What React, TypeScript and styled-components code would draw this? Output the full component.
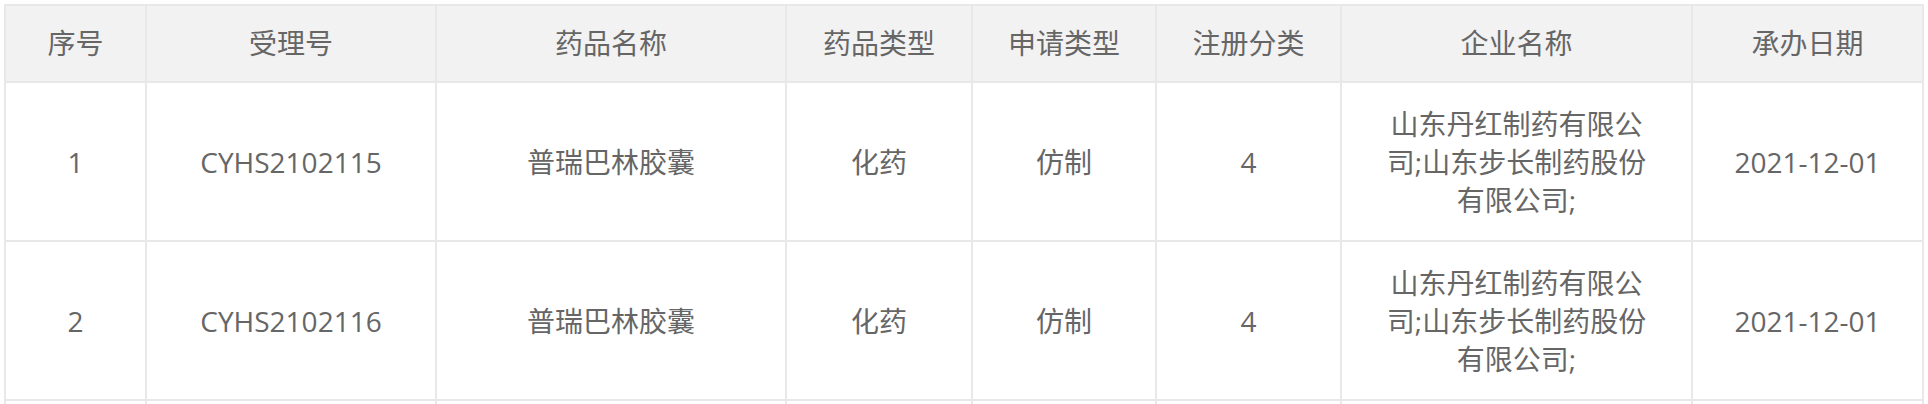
import React from "react";
import styled, { createGlobalStyle } from "styled-components";

const GlobalStyle = createGlobalStyle`
  html, body {
    margin: 0;
    padding: 0;
    background: #ffffff;
  }
  body {
    font-family: "Open Sans", "Noto Sans CJK SC", sans-serif;
  }
`;

const Page = styled.div`
  padding: 4px;
`;

const Table = styled.table`
  width: 1920px;
  table-layout: fixed;
  border-collapse: collapse;
  font-family: "Open Sans", "Noto Sans CJK SC", sans-serif;
  font-size: 28px;
  color: #666666;
`;

const HeadCell = styled.th`
  border: 2px solid #e8e8e8;
  background: #f2f2f2;
  font-weight: 400;
  line-height: 75px;
  padding: 0;
  text-align: center;
  vertical-align: middle;
`;

const BodyCell = styled.td`
  border: 2px solid #e8e8e8;
  background: #ffffff;
  padding: 21px 40px;
  line-height: 38px;
  height: 115px;
  text-align: center;
  vertical-align: middle;
  word-break: normal;
`;

type Row = {
  no: number;
  accept: string;
  name: string;
  drugType: string;
  applyType: string;
  regClass: string;
  company: string;
  date: string;
};

const columns: { title: string; width: number }[] = [
  { title: "序号", width: 141 },
  { title: "受理号", width: 290 },
  { title: "药品名称", width: 350 },
  { title: "药品类型", width: 186 },
  { title: "申请类型", width: 184 },
  { title: "注册分类", width: 185 },
  { title: "企业名称", width: 351 },
  { title: "承办日期", width: 231 },
];

const rows: Row[] = [
  {
    no: 1,
    accept: "CYHS2102115",
    name: "普瑞巴林胶囊",
    drugType: "化药",
    applyType: "仿制",
    regClass: "4",
    company: "山东丹红制药有限公司;山东步长制药股份有限公司;",
    date: "2021-12-01",
  },
  {
    no: 2,
    accept: "CYHS2102116",
    name: "普瑞巴林胶囊",
    drugType: "化药",
    applyType: "仿制",
    regClass: "4",
    company: "山东丹红制药有限公司;山东步长制药股份有限公司;",
    date: "2021-12-01",
  },
];

export default function App() {
  return (
    <>
      <GlobalStyle />
      <Page>
        <Table>
          <colgroup>
            {columns.map((c) => (
              <col key={c.title} style={{ width: c.width }} />
            ))}
          </colgroup>
          <thead>
            <tr>
              {columns.map((c) => (
                <HeadCell key={c.title}>{c.title}</HeadCell>
              ))}
            </tr>
          </thead>
          <tbody>
            {rows.map((r) => (
              <tr key={r.no}>
                <BodyCell>{r.no}</BodyCell>
                <BodyCell>{r.accept}</BodyCell>
                <BodyCell>{r.name}</BodyCell>
                <BodyCell>{r.drugType}</BodyCell>
                <BodyCell>{r.applyType}</BodyCell>
                <BodyCell>{r.regClass}</BodyCell>
                <BodyCell>{r.company}</BodyCell>
                <BodyCell>{r.date}</BodyCell>
              </tr>
            ))}
            <tr>
              {columns.map((c) => (
                <BodyCell key={c.title} />
              ))}
            </tr>
          </tbody>
        </Table>
      </Page>
    </>
  );
}
